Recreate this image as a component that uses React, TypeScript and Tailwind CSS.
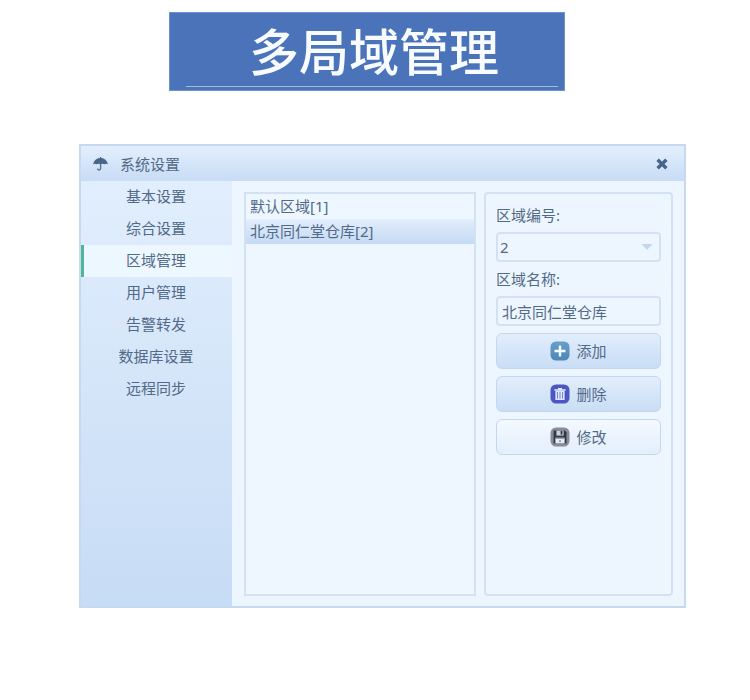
import { useState } from 'react';
import clsx from 'clsx';

const menu = ['基本设置', '综合设置', '区域管理', '用户管理', '告警转发', '数据库设置', '远程同步'];

const regions = [
  { id: '1', name: '默认区域' },
  { id: '2', name: '北京同仁堂仓库' },
];

const UmbrellaIcon = () => (
  <svg width="15" height="14" viewBox="0 0 15 14">
    <path
      d="M7 0h1.200v1C11.500 1.300 14.200 3.500 15 7.400c-1.200-.8-2.400-.8-3.600-.1-1.300-.8-2.600-.8-3.900 0-1.300-.8-2.600-.8-3.900 0C2.400 6.600 1.200 6.600 0 7.400.8 3.500 3.600 1.300 7 1z"
      fill="#48658a"
    />
    <path d="M7.600 7v4.300c0 2.200-3 2.200-3 .1" fill="none" stroke="#5a7597" strokeWidth="1.400" />
  </svg>
);

const CloseIcon = () => (
  <svg width="12" height="12" viewBox="0 0 12 12" fill="none" stroke="#48658a" strokeWidth="3.4">
    <path d="M1.6 1.8 10.4 10.2M10.4 1.8 1.6 10.2" />
  </svg>
);

const AddIcon = () => (
  <svg width="20" height="20" viewBox="0 0 20 20">
    <defs>
      <linearGradient id="add" x1="0" y1="0" x2="0" y2="1">
        <stop offset="0" stopColor="#6a9ecb" />
        <stop offset="1" stopColor="#4f86b8" />
      </linearGradient>
    </defs>
    <rect x="0.5" y="0.5" width="19" height="19" rx="5.5" fill="url(#add)" />
    <path d="M10 4.500v11M4.5 10h11" stroke="#f4faff" strokeWidth="2.4" />
  </svg>
);

const TrashIcon = () => (
  <svg width="20" height="20" viewBox="0 0 20 20">
    <rect x="0.5" y="0.5" width="19" height="19" rx="5.5" fill="#4b55c4" />
    <path d="M8 4h4v1.300h3.600v1.500H4.400V5.300H8z" fill="#e6eafb" />
    <path d="M5.400 6.800h9.200v9.200H5.400z" fill="#dfe4fa" />
    <path d="M7.500 8v6.600M10 8v6.600M12.500 8v6.600" stroke="#7680d4" strokeWidth="1" />
  </svg>
);

const SaveIcon = () => (
  <svg width="20" height="20" viewBox="0 0 20 20">
    <rect x="0.5" y="0.5" width="19" height="19" rx="5.500" fill="#888c9b" />
    <path d="M3.600 3.600h11.200l1.700 1.700v11.100H3.600z" fill="#35383f" />
    <path d="M6.400 3.600h7.200v5H6.400z" fill="#c9d0d8" />
    <path d="M10.600 4h1.800v3.600h-1.800z" fill="#35383f" />
    <path d="M5.400 10.800h9.200v5.600H5.400z" fill="#e9edf0" />
    <path d="M5.400 10.400h9.200v1.300H5.400z" fill="#5d84b5" />
    <circle cx="10" cy="14.100" r="0.9" fill="#6b7077" />
  </svg>
);

const buttonClass =
  'flex h-9 w-full items-center justify-center gap-1.5 rounded-md border border-[#c3d8ee] bg-linear-to-b';

const App = () => {
  const [tab, setTab] = useState('区域管理');
  const [selected, setSelected] = useState('2');
  const [name, setName] = useState('北京同仁堂仓库');

  return (
    <main className="min-h-screen bg-white pt-3 pb-16 font-['Noto_Sans','Noto_Sans_CJK_SC',sans-serif] text-[15px] leading-5 text-[#526a88]">
      <div className="mr-[185px] ml-[169px] border border-[#6d94d2] bg-[#4a73b9] pr-1.5 pb-[3px] pl-4">
        <h1 className="border-b border-[#a4b9dc] pt-1.5 pb-1.5 pl-1 text-center font-['Noto_Sans_CJK_SC',sans-serif] text-[50px] leading-[61px] font-medium whitespace-nowrap text-[#f8fbff]">
          多局域管理
        </h1>
      </div>

      <section className="mt-[53px] mr-16 ml-[79px] border-2 border-[#c5daf1] bg-[#edf6fe]">
        <header className="flex h-[35px] items-center bg-linear-to-b from-[#e3effd] to-[#c8dcf5] pr-4 pl-3">
          <UmbrellaIcon />
          <h2 className="ml-3 flex-1">系统设置</h2>
          <button type="button" aria-label="关闭">
            <CloseIcon />
          </button>
        </header>

        <div className="flex">
          <nav className="w-[151px] shrink-0 bg-linear-to-b from-[#e1eefd] to-[#c7dcf5]">
            {menu.map((item) => (
              <button
                key={item}
                type="button"
                onClick={() => setTab(item)}
                className={clsx(
                  'block h-8 w-full border-l-3 pr-1 pb-0.5 text-center',
                  item === tab ? 'border-[#4fb59b] bg-[#edf7ff]' : 'border-transparent',
                )}
              >
                {item}
              </button>
            ))}
          </nav>

          <div className="flex min-w-0 flex-1 gap-2 pt-[11px] pr-[11px] pb-2.5 pl-3">
            <ul className="min-h-[404px] min-w-0 flex-1 border-2 border-[#d3e2f3] bg-[#eef7ff]">
              {regions.map((region) => (
                <li key={region.id}>
                  <button
                    type="button"
                    onClick={() => setSelected(region.id)}
                    className={clsx(
                      'block h-[25px] w-full px-1 pb-0.5 text-left',
                      region.id === selected && 'bg-linear-to-b from-[#e2eefc] to-[#c5daf4]',
                    )}
                  >
                    {region.name}[{region.id}]
                  </button>
                </li>
              ))}
            </ul>

            <form
              className="w-[189px] shrink-0 rounded border-2 border-[#d3e2f3] px-2.5 py-[11px]"
              onSubmit={(e) => e.preventDefault()}
            >
              <label htmlFor="region-id" className="block">
                区域编号:
              </label>
              <div className="relative mt-[7px]">
                <select
                  id="region-id"
                  value={selected}
                  onChange={(e) => setSelected(e.target.value)}
                  className="block h-[30px] w-full appearance-none rounded border-2 border-[#d3e2f3] bg-[#edf6fe] px-0.5"
                >
                  {regions.map((region) => (
                    <option key={region.id}>{region.id}</option>
                  ))}
                </select>
                <svg
                  className="pointer-events-none absolute top-3 right-2"
                  width="12"
                  height="6"
                  viewBox="0 0 12 6"
                >
                  <path d="M0.500 0h11L6 6z" fill="#c3d6ec" />
                </svg>
              </div>

              <label htmlFor="region-name" className="mt-[7px] block">
                区域名称:
              </label>
              <input
                id="region-name"
                value={name}
                onChange={(e) => setName(e.target.value)}
                className="mt-[7px] block h-[30px] w-full rounded border-2 border-[#d3e2f3] bg-[#edf6fe] px-1"
              />

              <div className="mt-[7px] space-y-[7px]">
                <button type="button" className={clsx(buttonClass, 'from-[#e2eefc] to-[#c8ddf5]')}>
                  <AddIcon />
                  添加
                </button>
                <button type="button" className={clsx(buttonClass, 'from-[#e2eefc] to-[#c8ddf5]')}>
                  <TrashIcon />
                  删除
                </button>
                <button type="submit" className={clsx(buttonClass, 'from-[#f4f9ff] to-[#e2effc]')}>
                  <SaveIcon />
                  修改
                </button>
              </div>
            </form>
          </div>
        </div>
      </section>
    </main>
  );
};

export default App;
